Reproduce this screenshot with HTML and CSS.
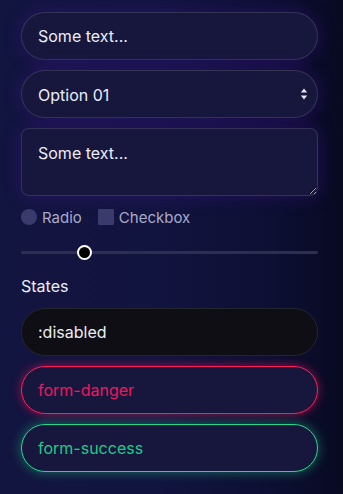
FILE: index.html
```html
<!DOCTYPE html>
<html lang="en">
<head>
<meta charset="utf-8">
<link rel="stylesheet" href="styles.css">
</head>
<body>
<main class="form">
  <input class="field" type="text" value="Some text...">
  <div class="select-wrap">
    <select class="field select">
      <option>Option 01</option>
      <option>Option 02</option>
    </select>
    <svg class="select-arrows" width="8" height="12" viewBox="0 0 8 12"><path d="M4 0.5 L7.2 4.6 L0.8 4.6 Z" fill="#e8e8f4"/><path d="M4 11.5 L7.2 7.4 L0.8 7.4 Z" fill="#e8e8f4"/></svg>
  </div>
  <textarea class="field area">Some text...</textarea>
  <div class="checks">
    <label class="check"><input type="radio" class="radio"> Radio</label>
    <label class="check"><input type="checkbox" class="box"> Checkbox</label>
  </div>
  <input class="range" type="range" min="0" max="100" value="20">
  <div class="label">States</div>
  <input class="field disabled" type="text" value=":disabled" disabled>
  <input class="field danger" type="text" value="form-danger">
  <input class="field success" type="text" value="form-success">
</main>
</body>
</html>
```
FILE: styles.css
```css
html, body {
  margin: 0;
  height: 100%;
}
body {
  background: linear-gradient(90deg, #12153f 0%, #121440 45%, #0d0f33 80%, #080a22 100%);
  font-family: Inter, "Noto Sans", sans-serif;
  color: #e6e6f2;
  overflow: hidden;
}
.form {
  display: flex;
  flex-direction: column;
  width: 297px;
  padding: 12px 25px 0 21px;
}
.field {
  box-sizing: border-box;
  display: block;
  width: 297px;
  height: 48px;
  margin: 0 0 10px 0;
  padding: 12px 16px;
  font: 16px/24px Inter, "Noto Sans", sans-serif;
  color: #ececf6;
  background: #17173d;
  border: 1px solid rgba(255, 255, 255, 0.12);
  border-radius: 24px;
  box-shadow: 0 0 18px rgba(80, 20, 170, 0.35);
  outline: none;
}
.select-wrap {
  position: relative;
  width: 297px;
}
.select {
  appearance: none;
  -webkit-appearance: none;
}
.select-arrows {
  position: absolute;
  right: 10px;
  top: 18px;
}
.area {
  height: 68px;
  border-radius: 8px;
  resize: vertical;
  margin-bottom: 11px;
}
.checks {
  display: flex;
  gap: 16px;
  height: 20px;
  align-items: center;
  font-size: 15px;
  color: #a9a9c9;
}
.check {
  display: flex;
  align-items: center;
  gap: 5px;
}
.radio, .box {
  appearance: none;
  -webkit-appearance: none;
  margin: 0;
  width: 16px;
  height: 16px;
  background: #3a3a6c;
  border: none;
}
.radio { border-radius: 50%; }
.box { border-radius: 1px; }
.range {
  -webkit-appearance: none;
  appearance: none;
  width: 297px;
  height: 16px;
  margin: 17px 0 0 0;
  background: transparent;
}
.range::-webkit-slider-runnable-track {
  height: 3px;
  background: #2c2e52;
  border-radius: 2px;
}
.range::-webkit-slider-thumb {
  -webkit-appearance: none;
  box-sizing: border-box;
  width: 15px;
  height: 15px;
  margin-top: -6px;
  border-radius: 50%;
  background: #000;
  border: 2px solid #fff;
}
.label {
  margin: 14px 0 10px 0;
  font-size: 16px;
  line-height: 24px;
  color: #ececf6;
}
.disabled {
  background: #0e0e14;
  border-color: #25252e;
  box-shadow: none;
  color: #ededf0;
}
.danger {
  border: 1.5px solid #ff1c5c;
  color: #ee175c;
  box-shadow: 0 0 10px rgba(255, 20, 90, 0.55);
}
.success {
  border: 1.5px solid #1fd98f;
  color: #1fcb88;
  box-shadow: 0 0 12px rgba(30, 220, 140, 0.45);
}
```
